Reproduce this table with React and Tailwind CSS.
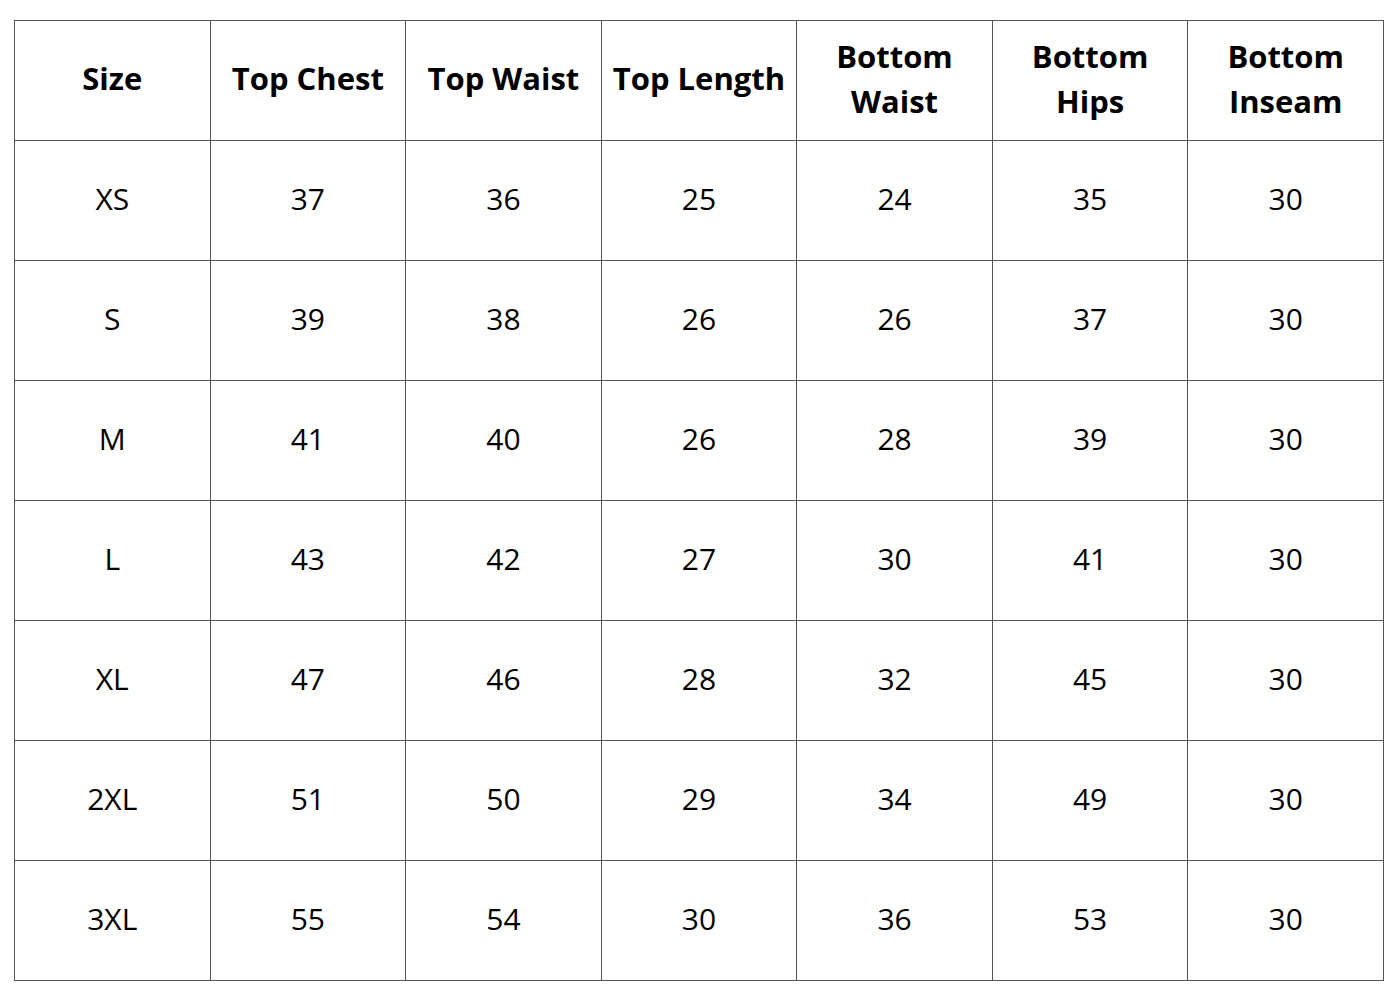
const headers = [
  "Size",
  "Top Chest",
  "Top Waist",
  "Top Length",
  ["Bottom", "Waist"],
  ["Bottom", "Hips"],
  ["Bottom", "Inseam"],
];

const rows = [
  ["XS", 37, 36, 25, 24, 35, 30],
  ["S", 39, 38, 26, 26, 37, 30],
  ["M", 41, 40, 26, 28, 39, 30],
  ["L", 43, 42, 27, 30, 41, 30],
  ["XL", 47, 46, 28, 32, 45, 30],
  ["2XL", 51, 50, 29, 34, 49, 30],
  ["3XL", 55, 54, 30, 36, 53, 30],
];

export default function App() {
  return (
    <div className="w-[1400px] h-[1000px] bg-white pt-[20px] pl-[14px] font-['Open_Sans',sans-serif] text-black">
      <table className="w-[1370px] table-fixed border-collapse">
        <thead>
          <tr className="h-[120px]">
            {headers.map((h, i) => (
              <th
                key={i}
                className="border border-[#555] p-0 pb-[4px] text-[31px] font-bold leading-[45px] text-center align-middle whitespace-nowrap"
              >
                {Array.isArray(h) ? (
                  <>
                    {h[0]}
                    <br />
                    {h[1]}
                  </>
                ) : (
                  h
                )}
              </th>
            ))}
          </tr>
        </thead>
        <tbody>
          {rows.map((r, i) => (
            <tr key={i} className="h-[120px]">
              {r.map((v, j) => (
                <td
                  key={j}
                  className="border border-[#555] p-0 pb-[4px] text-[30px] font-normal text-center align-middle"
                >
                  {v}
                </td>
              ))}
            </tr>
          ))}
        </tbody>
      </table>
    </div>
  );
}
